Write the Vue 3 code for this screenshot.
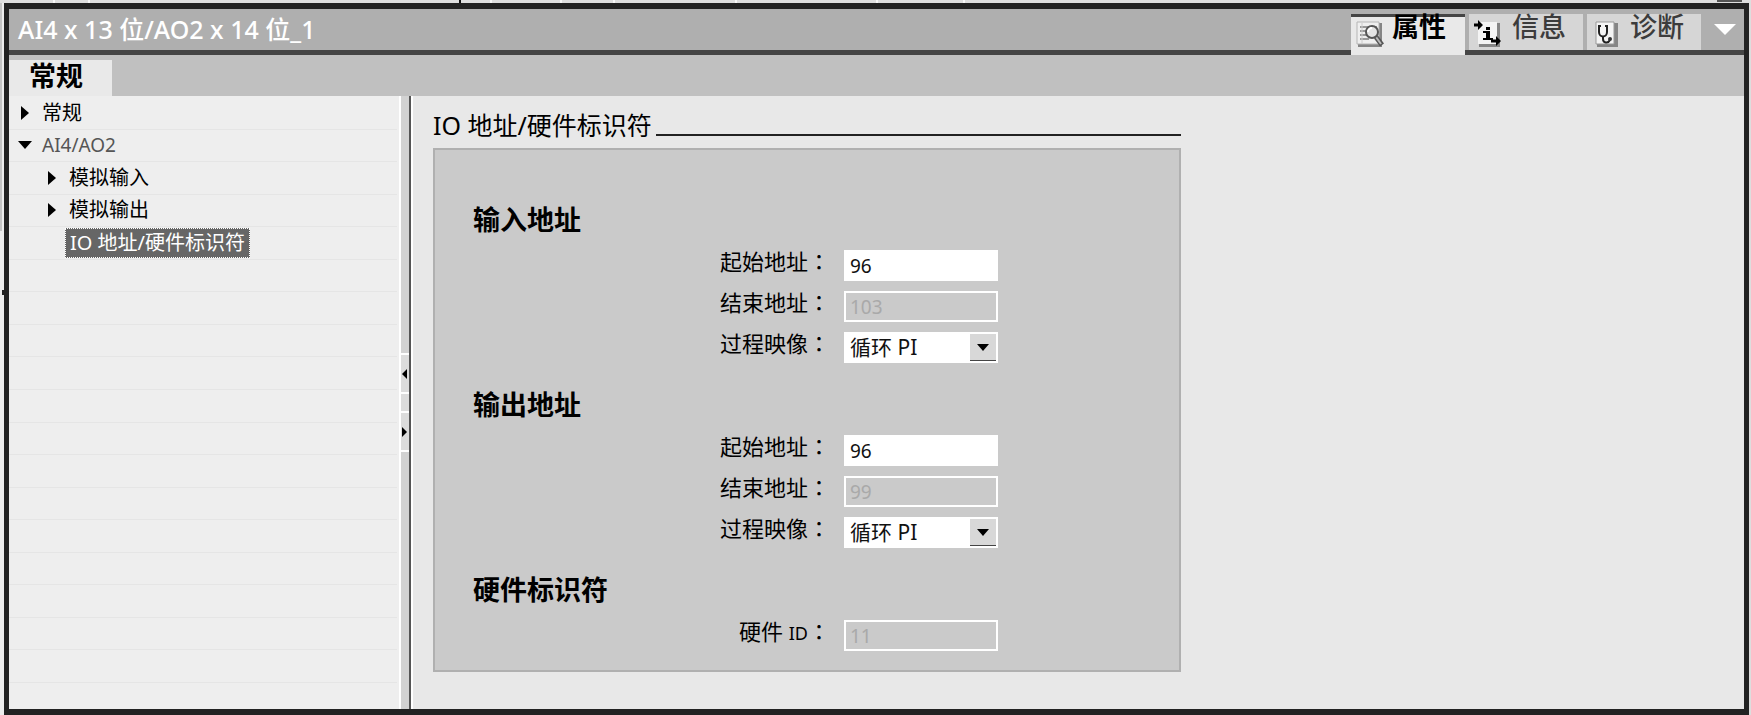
<script setup>
import { ref } from 'vue'

const activeTab = ref('properties')

const rows = [
  { label: '常规', arrow: 'right', level: 0 },
  { label: 'AI4/AO2', arrow: 'down', level: 0, muted: true },
  { label: '模拟输入', arrow: 'right', level: 1 },
  { label: '模拟输出', arrow: 'right', level: 1 },
  { label: 'IO 地址/硬件标识符', level: 1, selected: true },
]
const emptyRows = 14

const sections = [
  {
    title: '输入地址',
    fields: [
      { id: 'in-start', label: '起始地址', value: '96' },
      { id: 'in-end', label: '结束地址', value: '103', disabled: true },
      { id: 'in-image', label: '过程映像', value: '循环 PI', select: true },
    ],
  },
  {
    title: '输出地址',
    fields: [
      { id: 'out-start', label: '起始地址', value: '96' },
      { id: 'out-end', label: '结束地址', value: '99', disabled: true },
      { id: 'out-image', label: '过程映像', value: '循环 PI', select: true },
    ],
  },
  {
    title: '硬件标识符',
    fields: [{ id: 'hw-id', label: '硬件 ', latin: 'ID', value: '11', disabled: true }],
  },
]
</script>

<template>
  <div class="desktop" lang="zh-CN">
    <div class="top-strip">
      <i class="tick t1"></i><i class="tick t2"></i><i class="tick dark"></i><i class="tick t3"></i>
      <i class="tick t4"></i><i class="tick t5"></i><i class="tick t6"></i><i class="tick t7"></i>
      <i class="tick t8"></i><i class="scroll-end"></i>
    </div>
    <div class="left-strip"><i class="left-thumb"></i><i class="left-handle"></i></div>
    <main class="window">
      <header class="titlebar">
        <h1>AI4 x 13 位/AO2 x 14 位_1</h1>
        <nav class="tabs">
          <button type="button" class="tab" :class="{ active: activeTab === 'properties' }" @click="activeTab = 'properties'">
            <svg class="tab-icon" width="32" height="30" viewBox="0 0 32 30" aria-hidden="true">
              <path d="M3 4h24v24H3z" fill="#858585" />
              <path d="M2 3h22v22H2z" fill="#efefef" stroke="#b5b5b5" />
              <path d="M5 8h17M5 12h8M5 16h7M5 20h9" stroke="#999" stroke-width="2" />
              <path d="M7 4v21" stroke="#ccc" />
              <path d="M21 18l6 8" stroke="#555" stroke-width="5" />
              <path d="M21 18l5 7" stroke="#bbb" stroke-width="2" />
              <circle cx="17" cy="13" r="6" fill="#e4e4e4" stroke="#555" stroke-width="2" />
              <path d="M13 13a4 4 0 0 1 4-4" fill="none" stroke="#fff" stroke-width="2" />
            </svg>
            <span>属性</span>
          </button>
          <button type="button" class="tab" :class="{ active: activeTab === 'info' }" @click="activeTab = 'info'">
            <svg class="tab-icon" width="32" height="30" viewBox="0 0 32 30" aria-hidden="true">
              <path d="M6 4h21v24H6z" fill="#858585" />
              <path d="M5 3h19v22H5z" fill="#f4f4f4" />
              <path d="M1 6h5M18 22h6" stroke="#000" stroke-width="3" />
              <path d="M5 1l5 5-5 5zM23 17l5 5-5 5z" fill="#000" />
              <path d="M13 8h4v3h-4zM10 12h7v7h3v2H10v-2h3v-5h-3z" fill="#000" />
            </svg>
            <span>信息</span>
          </button>
          <button type="button" class="tab" :class="{ active: activeTab === 'diagnostics' }" @click="activeTab = 'diagnostics'">
            <svg class="tab-icon" width="32" height="30" viewBox="0 0 32 30" aria-hidden="true">
              <path d="M6 4h21v24H6z" fill="#858585" />
              <path d="M5 3h18v22H5z" fill="#f4f4f4" stroke="#999" />
              <path d="M10 7H8v6c0 6 8 6 8 0V7h-2M12 18v2c0 4 5 5 7 1" fill="none" stroke="#222" stroke-width="2" />
              <circle cx="19" cy="20" r="2" fill="#333" />
            </svg>
            <span>诊断</span>
          </button>
        </nav>
        <button type="button" class="collapse" aria-label="折叠">
          <svg width="22" height="11" viewBox="0 0 22 11"><path d="M0 0h22L11 11z" fill="#fff" /></svg>
        </button>
      </header>

      <div class="subtabs"><button type="button" class="subtab">常规</button></div>

      <div class="body">
        <ul class="tree">
          <li v-for="row in rows" :key="row.label" :class="['row', 'level' + row.level]">
            <span class="arrow">
              <svg v-if="row.arrow === 'right'" width="8" height="14" viewBox="0 0 8 14"><path d="M0 0l8 7-8 7z" /></svg>
              <svg v-else-if="row.arrow === 'down'" width="14" height="8" viewBox="0 0 14 8"><path d="M0 0h14L7 8z" /></svg>
            </span>
            <button type="button" class="node" :class="{ selected: row.selected, muted: row.muted }">{{ row.label }}</button>
          </li>
          <li v-for="n in emptyRows" :key="n" class="row"></li>
        </ul>

        <div class="splitter">
          <button type="button" aria-label="向左折叠">
            <svg width="5" height="10" viewBox="0 0 5 10"><path d="M5 0v10L0 5z" /></svg>
          </button>
          <span class="grip"></span>
          <button type="button" aria-label="向右展开">
            <svg width="5" height="10" viewBox="0 0 5 10"><path d="M0 0v10l5-5z" /></svg>
          </button>
        </div>

        <section class="content">
          <div class="group">
            <h2><span>IO 地址/硬件标识符</span></h2>
            <form class="panel" @submit.prevent>
              <fieldset v-for="s in sections" :key="s.title">
                <legend>{{ s.title }}</legend>
                <div v-for="f in s.fields" :key="f.id" class="field">
                  <label :for="f.id">{{ f.label }}<span v-if="f.latin" class="latin">{{ f.latin }}</span><span class="colon" lang="zh-TW">：</span></label>
                  <div v-if="f.select" class="select">
                    <select :id="f.id"><option>{{ f.value }}</option></select>
                    <span class="drop"><svg width="12" height="7" viewBox="0 0 12 7"><path d="M0 0h12L6 7z" /></svg></span>
                  </div>
                  <input v-else :id="f.id" type="text" :value="f.value" :disabled="f.disabled" />
                </div>
              </fieldset>
            </form>
          </div>
        </section>
      </div>
    </main>
    <div class="right-strip"></div>
  </div>
</template>

<style>
body {
  margin: 0;
  background: #e8e8e8;
}
</style>

<style scoped>
* {
  box-sizing: border-box;
}
.desktop {
  display: grid;
  grid-template: 3px 1fr / 4px 1fr 2px;
  min-height: 100vh;
  font-family: "Noto Sans", "Noto Sans CJK SC", sans-serif;
  color: #000;
}
button {
  font: inherit;
  color: inherit;
  border: 0;
  padding: 0;
  background: none;
}
svg {
  display: block;
}
.top-strip {
  grid-column: 1 / -1;
  position: relative;
  background: #dedede;
}
.tick {
  position: absolute;
  top: 0;
  width: 2px;
  height: 3px;
  background: #f8f8f8;
}
.t1 { left: 3%; }
.t2 { left: 5%; }
.dark { left: 26%; background: #111; margin-left: 4px; }
.t3 { left: 28%; }
.t4 { left: 32%; }
.t5 { left: 35%; }
.t6 { left: 42%; }
.t7 { left: 50%; }
.t8 { left: 55%; }
.scroll-end {
  position: absolute;
  right: 9px;
  width: 25px;
  height: 2px;
  background: #555;
}
.left-strip {
  position: relative;
  background: #ededed;
}
.left-thumb {
  position: absolute;
  top: 0;
  width: 2px;
  height: 228px;
  background: #c4c4c4;
}
.left-handle {
  position: absolute;
  top: 287px;
  right: 0;
  width: 2px;
  height: 5px;
  background: #222;
}
.right-strip {
  background: #ddd;
}
.window {
  display: flex;
  flex-direction: column;
  border: 5px solid #222;
  border-width: 6px 5px;
  min-width: 0;
}
.titlebar {
  display: flex;
  align-items: stretch;
  height: 46px;
  background: #afafaf;
  border-bottom: 5px solid #454545;
}
h1 {
  flex: 1;
  margin: 0;
  padding-left: 9px;
  font-size: 25px;
  line-height: 40px;
  font-weight: 500;
  color: #fff;
  white-space: nowrap;
}
.tabs {
  display: flex;
  gap: 4px;
  padding-top: 5px;
  height: 46px;
}
.tab {
  display: flex;
  width: 114px;
  height: 36px;
  background: #d6d6d6;
  color: #3c3c3c;
  font-size: 27px;
  line-height: 26px;
  font-weight: 500;
  white-space: nowrap;
}
.tab-icon {
  flex: none;
  margin: 5px 7px 0 4px;
}
.tab.active {
  height: 41px;
  background: #e9e9e9;
  box-shadow: inset 0 3px #454545;
  color: #000;
  font-weight: 700;
}
.tab.active .tab-icon {
  margin-right: 5px;
}
.collapse {
  display: flex;
  align-items: flex-start;
  width: 43px;
  padding: 15px 8px 0 13px;
}
.subtabs {
  height: 41px;
  padding-top: 5px;
  background: #c0c0c0;
}
.subtab {
  display: block;
  width: 103px;
  height: 36px;
  padding: 0 0 5px 20px;
  background: #e9e9e9;
  text-align: left;
  font-size: 27px;
  line-height: 30px;
  font-weight: 700;
}
.body {
  flex: 1;
  display: grid;
  grid-template-columns: 390px 14px 1fr;
}
.tree {
  display: grid;
  grid-template-rows: repeat(18, 1fr) 26px;
  margin: 0;
  padding: 1px 0 0;
  list-style: none;
  background: #eee;
  font-size: 20px;
}
.row {
  display: flex;
  align-items: center;
  border-bottom: 1px solid #e5e5e5;
  margin-right: 2px;
}
.row:last-child {
  border: 0;
}
.level0 {
  padding-left: 5px;
}
.level1 {
  padding-left: 32px;
}
.arrow {
  width: 22px;
  display: flex;
  justify-content: center;
}
.node {
  padding: 0 6px;
  line-height: 30px;
  white-space: nowrap;
}
.muted {
  font-size: 19px;
  color: #555;
}
.selected {
  margin-left: 2px;
  padding: 0 4px;
  line-height: 28px;
  border: 1px dotted #fff;
  background: #666;
  color: #fff;
}
.splitter {
  display: flex;
  flex-direction: column;
  justify-content: center;
  background: #d2d2d2;
  border: solid #fff;
  border-width: 0 2px;
  box-shadow: inset -2px 0 #555;
}
.splitter button {
  display: flex;
  align-items: center;
  height: 41px;
  margin-right: 2px;
  padding-left: 1px;
  border: solid #fff;
  border-width: 2px 0;
  background: #dcdcdc;
}
.grip {
  height: 17px;
  margin-right: 2px;
  background: #dcdcdc;
}
.content {
  padding: 15px 20px;
  background: #e8e8e8;
}
.group {
  max-width: 748px;
}
h2 {
  display: flex;
  align-items: flex-end;
  gap: 4px;
  margin: 0 0 9px;
  font-size: 25px;
  line-height: 24px;
  font-weight: 400;
}
h2 span {
  line-height: 28px;
}
h2::after {
  content: "";
  flex: 1;
  height: 2px;
  margin-bottom: 3px;
  background: #222;
}
.panel {
  display: flex;
  flex-direction: column;
  gap: 26px;
  padding: 54px 38px 19px;
  border: 2px solid #b0b0b0;
  background: #cacaca;
}
fieldset {
  display: flex;
  flex-direction: column;
  gap: 10px;
  margin: 0;
  padding: 0;
  border: 0;
  min-width: 0;
}
legend {
  padding: 0;
  margin-bottom: 14px;
  font-size: 27px;
  line-height: 32px;
  font-weight: 700;
}
.field {
  display: grid;
  grid-template-columns: 357px 154px;
  gap: 14px;
  height: 31px;
}
label {
  text-align: right;
  font-size: 22px;
  line-height: 20px;
  white-space: pre;
}
.latin {
  font-size: 18px;
}
.colon {
  font-family: "Noto Sans CJK TC", sans-serif;
}
input,
select {
  width: 100%;
  height: 31px;
  margin: 0;
  padding: 0 4px;
  border: 2px solid #fff;
  border-radius: 0;
  background: #fff;
  color: #111;
  font-family: inherit;
  font-size: 19px;
  appearance: none;
}
select {
  font-size: 21px;
  line-height: 25px;
}
input:disabled {
  background: #cacaca;
  color: #a9a9a9;
}
.select {
  position: relative;
}
.drop {
  position: absolute;
  top: 2px;
  right: 2px;
  width: 26px;
  height: 27px;
  display: flex;
  align-items: center;
  justify-content: center;
  background: #d8d8d8;
  border-bottom: 1px solid #444;
  pointer-events: none;
}
</style>
